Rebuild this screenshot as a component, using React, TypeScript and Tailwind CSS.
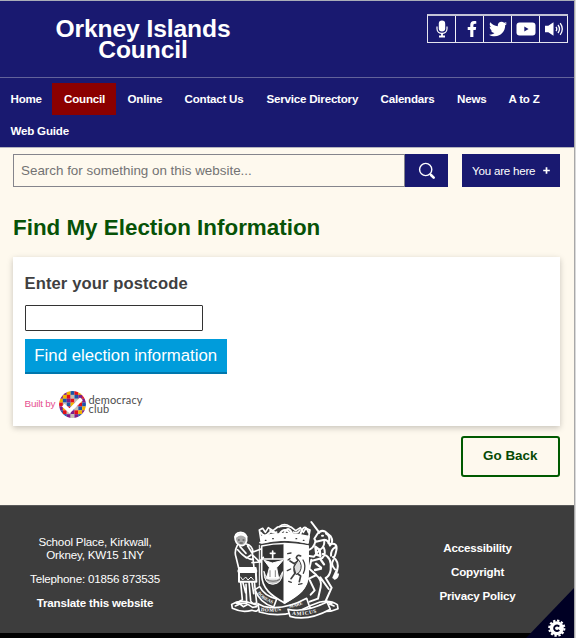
import { FaFacebookF, FaTwitter } from "react-icons/fa";

const navItems = [
  { label: "Home", cls: "w-[52px] pl-[10.5px]" },
  { label: "Council", cls: "w-[64px] pl-[12px] bg-[#8b0000]" },
  { label: "Online", cls: "w-[57px] pl-[11.5px]" },
  { label: "Contact Us", cls: "w-[82px] pl-[11.5px]" },
  { label: "Service Directory", cls: "w-[114px] pl-[11.5px]" },
  { label: "Calendars", cls: "w-[77px] pl-[11.5px]" },
  { label: "News", cls: "w-[51px] pl-[11px]" },
  { label: "A to Z", cls: "w-[60px] pl-[11.5px]" },
  { label: "Web Guide", cls: "w-[90px] pl-[10.5px]" },
];

function MicIcon() {
  return (
    <svg viewBox="0 0 12 18" className="w-3 h-[18px]" fill="none" stroke="white">
      <rect x="2.8" y="0.5" width="6.4" height="11" rx="3.2" fill="white" stroke="none" />
      <path d="M1 6.5v2.3c0 6 10 6 10 0V6.5" strokeWidth="1.2" />
      <path d="M6 13v3M3 16.5h6" strokeWidth="1.8" />
    </svg>
  );
}

function YoutubeIcon() {
  return (
    <svg viewBox="0 0 20 14" className="w-5 h-3.5">
      <rect x="0.5" y="0.5" width="19" height="13" rx="3" fill="white" />
      <path d="M8.3 4.6v4.8L12.6 7z" fill="#191970" />
    </svg>
  );
}

function SpeakerIcon() {
  return (
    <svg viewBox="0 0 20 14" className="w-5 h-3.5" fill="none" stroke="white" strokeWidth="1.3">
      <path d="M1 3.7h3.3L9.5 0.3v13.4L4.3 10.3H1z" fill="white" stroke="none" />
      <path d="M12 4.8q1.6 2.2 0 4.4M14 3q3 4 0 8M16.2 1.2q4.2 5.8 0 11.6" />
    </svg>
  );
}

const Y = "#f0b400";
const P = "#7d1d8a";
const B = "#1c55a8";
const R = "#e0111b";
const G = "#c3bfb2";
const mosaic = [
  [B, P, Y, B, R, Y, B],
  [P, Y, R, G, B, P, R],
  [Y, B, P, R, G, Y, P],
  [R, G, B, Y, P, R, B],
  [P, Y, R, B, G, B, Y],
  [B, R, G, P, R, Y, P],
  [Y, B, P, G, P, B, R],
];

function MosaicLogo() {
  return (
    <svg viewBox="0 0 28 28" className="w-[27px] h-[27px] shrink-0">
      <defs>
        <clipPath id="disc">
          <circle cx="14" cy="14" r="13.9" />
        </clipPath>
      </defs>
      <g clipPath="url(#disc)">
        {mosaic.map((row, r) =>
          row.map((fill, c) => <rect key={`${r}-${c}`} x={c * 4} y={r * 4} width="4.1" height="4.1" fill={fill} />)
        )}
      </g>
      <path d="M4.4 14.6l6.6 6L23.2 8.2" fill="none" stroke="white" strokeWidth="4" />
    </svg>
  );
}

function Crest() {
  return (
    <svg viewBox="0 0 390 360" className="w-[130px] h-[120px]" fill="none" stroke="white" strokeWidth="5" strokeLinejoin="round" strokeLinecap="round">
      {/* compartment */}
      <path d="M35 283q22-14 50-6l36 12q-6 20-26 12-30 8-58-6zM352 284q-20-14-52-8l-32 12q4 18 26 13 32 8 60-5z" />
      <path d="M46 288l14-6 10 8 14-7 14 9 12-2M342 288l-14-6-10 8-16-6-14 8" strokeWidth="5" />
      {/* crown */}
      <path d="M124 98L118 60l10-5 8 12 9-14 14 9 14-11 20-3 20 3 14 11 14-9 9 14 8-12 12 5-7 38q-70-17-143 0z" />
      <path d="M178 50q15-13 32 0M150 60q8 12 20 6M240 60q-8 12-20 6" strokeWidth="5" />
      <path d="M126 99q68-18 138 0l3-19q-71-18-144 0z" fill="white" />
      <path d="M122 68q12 16 24 2t24 4 24-6 24 6 24-4 24-2M180 70q14-20 30 0" strokeWidth="6" />
      <path d="M136 91h2M158 86h2M193 84h3M228 86h2M250 91h2" stroke="#3d3d3d" strokeWidth="4" />
      {/* shield */}
      <path d="M125 108q68-15 139 0v85c0 42-28 62-70 86-41-22-69-44-69-86z" fill="#333" strokeWidth="5" />
      <path d="M193 104q40-2 71 4v85c0 42-28 62-71 86z" fill="white" />
      <path d="M127 147h65" strokeWidth="5" />
      <path d="M158 123v22M151 130h14" strokeWidth="5" />
      <path d="M133 151l24 8 32-8-19 22 6 32h-36l8-32z" fill="white" strokeWidth="3" />
      <path d="M132 185q-1 36 26 38 29-2 30-38-7 20-17 22h-22q-10-2-17-22z" fill="white" fillOpacity=".7" strokeWidth="3" />
      <path d="M150 182v18M166 182v18M139 209q20 10 40 0" stroke="#444" strokeWidth="2" />
      <g stroke="#3d3d3d">
        <path d="M242 138q-10-5-13 5l6 9-12 9-13-8M224 166q-4 14 1 24l-12 16M230 189l12 9-4 17" strokeWidth="5" />
        <path d="M236 150q14 16 3 36l-11 8-6-22z" fill="#ddd" strokeWidth="3" />
        <path d="M203 131l10-2M204 150l6-4M202 182l10-5M206 214l8 3M236 223l10-2M250 190q10-22-1-40" strokeWidth="4" />
      </g>
      {/* udaller supporter */}
      <path d="M46 90q-5-22 16-23 20 1 18 25-4 14-14 15-15 0-20-17z" fill="#a8a8a8" />
      <path d="M47 80q15-14 32 0" strokeWidth="7" />
      <path d="M55 90h3M69 90h3M60 99h7" stroke="#3d3d3d" strokeWidth="3" />
      <path d="M52 106q-10 18-4 35l8 33h46l-4-39 20 20 12-13M79 102q18 4 20 24l24-9M53 119q22 27 47 30M60 110l18 20M83 108l15 24M66 133l14 11 13-9M96 158l26-2" />
      <path d="M57 174h50l2 41H57z" strokeWidth="6" />
      <path d="M58 183h48" strokeWidth="12" />
      <path d="M62 201l6 9 9-9 7 9 9-9 7 8" strokeWidth="3" />
      <path d="M62 216l5 53-18 11h31l-2-57M87 216l5 56q4 12 18 7l-7-64M69 218l8 30M96 218l5 33" />
      <path d="M118 106v120" strokeWidth="3" />
      {/* unicorn supporter */}
      <path d="M298 68L274 36" strokeWidth="6" />
      <path d="M292 72q10-14 24-7l16 14q10 16-2 28-4-17-17-18l-25 6-5-9zM306 77h3" strokeWidth="6" />
      <path d="M286 95q-4 20-23 26M313 91q1 22-15 29l-16 20-14-2M311 112q9 19-4 32l-31 8M308 132q29 8 24 48-3 18-15 24l18 29-18 40 18 8M274 149l-6 27 21 19-22 11 17 35-12 13M286 193q21 17 16 38l-8 35-25 9M301 202l25 35" strokeWidth="6" />
      <path d="M329 103q25-7 20 18t-10 20q19 13 13 38l-8 27q8-2 10-13M345 112q-13 8-12 25M340 150q-9 14 5 28M352 177l-12 26M325 99q9-20-7-28" strokeWidth="6" />
      <path d="M286 110l13 10 2 18-12-4zM300 146l12 17M288 161l15 12M285 180l18-4" strokeWidth="7" />
      {/* motto ribbon */}
      <path d="M105 239l14-9q13 27 51 37l-9 24q-42-12-56-52z" fill="#3d3d3d" strokeWidth="5" />
      <path d="M114 281l19 9q60 12 127-25l8 24q-75 39-150 17z" fill="#3d3d3d" strokeWidth="5" />
      <path d="M204 298q51 11 117-22l10 22q-67 37-121 21z" fill="#3d3d3d" strokeWidth="5" />
      <path id="ribbonLeft" d="M112 249q16 24 54 34" stroke="none" />
      <path id="ribbonMid" d="M122 303q46 7 84-7" stroke="none" />
      <path id="ribbonEnd" d="M208 294q30-6 54-17" stroke="none" />
      <path id="ribbonLow" d="M216 314q54 7 106-20" stroke="none" />
      <g fill="white" stroke="none" fontFamily="Liberation Serif, serif" fontWeight="700" fontSize="16">
        <text fontSize="14"><textPath href="#ribbonLeft">BOREAS</textPath></text>
        <text fontSize="15" letterSpacing="1.5"><textPath href="#ribbonMid">DOMUS</textPath></text>
        <text fontSize="14"><textPath href="#ribbonEnd">MARE</textPath></text>
        <text letterSpacing="2"><textPath href="#ribbonLow">AMICUS</textPath></text>
      </g>
    </svg>
  );
}

function CookieCorner() {
  return (
    <div className="absolute right-0 bottom-0 w-12 h-[50px]">
      <svg viewBox="0 0 48 50" className="w-12 h-[50px]">
        <path d="M48 0V50H0z" fill="#000024" />
        <circle cx="30.8" cy="40.2" r="7" fill="white" />
        <circle cx="30.8" cy="40.2" r="7.6" fill="none" stroke="white" strokeWidth="2" strokeDasharray="2.3 1.68" />
        <path d="M33.2 38.6a2.8 2.8 0 1 0 0 3.3" fill="none" stroke="#000024" strokeWidth="1.9" />
      </svg>
    </div>
  );
}

export default function App() {
  return (
    <div className="flex w-[576px] h-[638px] overflow-hidden bg-[#fef9ee] font-['Liberation_Sans',Arial,sans-serif]">
      <div className="relative flex flex-col w-[574px] h-[638px] shrink-0">
        <header className="flex justify-between h-[77px] bg-[#191970] border-t border-[#a9adb8]">
          <div className="w-[286px] pt-[16.5px] text-center text-white font-bold text-[24.6px] leading-[21px] tracking-[-0.1px]">
            Orkney Islands
            <br />
            Council
          </div>
          <div className="flex mt-[13px] mr-[6px] h-[29px] w-[141px] border-l border-b border-[#e4e4ee] border-t-2 border-t-[#c4c4d6] text-white *:flex *:w-7 *:shrink-0 *:items-center *:justify-center *:border-r *:border-[#f2f2f8]">
            <div><MicIcon /></div>
            <div className="pl-1"><FaFacebookF size={16} /></div>
            <div><FaTwitter size={18} /></div>
            <div><YoutubeIcon /></div>
            <div><SpeakerIcon /></div>
          </div>
        </header>
        <nav className="flex flex-wrap content-start h-[71px] pt-[5px] bg-[#191970] border-t border-t-[#62629a] border-b border-b-[#b4b4bf] text-white font-bold text-[11.6px] tracking-[-0.22px] leading-8 whitespace-nowrap">
          {navItems.map((n) => (
            <a key={n.label} className={`h-8 ${n.cls}`}>{n.label}</a>
          ))}
        </nav>
        <main className="flex flex-col h-[357px] bg-[#fef9ee]">
          <div className="flex h-[33px] mt-1.5 ml-[13px]">
            <div className="w-[392px] border border-[#85858c] pl-[7px] text-[13.4px] leading-8 text-[#737373]">
              Search for something on this website...
            </div>
            <div className="flex items-center justify-center w-[43px] bg-[#191970]">
              <svg viewBox="0 0 18 18" className="w-[18px] h-[18px]" fill="none" stroke="white">
                <circle cx="7.7" cy="7.5" r="6.1" strokeWidth="1.4" />
                <path d="M12 12l1.5 1.5" strokeWidth="1.4" />
                <path d="M13 13l2.7 2.7" strokeWidth="2.6" strokeLinecap="round" />
              </svg>
            </div>
            <div className="ml-3.5 w-[98px] bg-[#191970] pl-[10px] flex items-center text-white text-[11.6px]">
              <span className="w-[71px] tracking-[-0.22px]">You are here</span>
              <svg viewBox="0 0 7 7" className="w-[7px] h-[7px]"><path d="M3.5 .2v6.6M.2 3.5h6.6" stroke="white" strokeWidth="1.7" /></svg>
            </div>
          </div>
          <h1 className="mt-[27px] ml-3 pl-px h-[28px] font-bold text-[22.4px] leading-[28px] text-[#075207]">
            Find My Election Information
          </h1>
          <section className="mt-[15px] ml-[13px] w-[547px] h-[169px] shrink-0 bg-white pl-[11.5px] pt-[16px] shadow-[0_2px_6px_rgba(0,0,0,0.22)]">
            <h2 className="font-bold text-[16.6px] leading-[21px] tracking-[0.1px] text-[#403f41]">Enter your postcode</h2>
            <div className="mt-[10.5px] w-[178px] h-[26px] border border-[#333] rounded-[1px]" />
            <button className="block mt-[8.5px] w-[202.5px] h-[35px] bg-[#009cdb] border-b-2 border-[#0077ad] text-white text-[16.8px] leading-[30px] whitespace-nowrap">
              Find election information
            </button>
            <div className="flex items-center mt-[16.5px]">
              <span className="w-[34px] text-[9.9px] tracking-[-0.2px] text-[#e6508f] whitespace-nowrap">Built by</span>
              <MosaicLogo />
              <span className="flex flex-col ml-[3px] font-['Lato',sans-serif] text-[11px] leading-[9px] tracking-[0.15px] text-[#4d4d4d]">
                <span>democracy</span>
                <span>club</span>
              </span>
            </div>
          </section>
          <button className="mt-2.5 ml-[460.5px] w-[99.5px] h-[41px] shrink-0 border-2 border-[#005a00] rounded-[3px] text-[13.4px] font-bold text-[#064a06]">
            Go Back
          </button>
        </main>
        <footer className="flex h-[128px] bg-[#3d3d3d] border-t border-[#5a5a5a] text-white text-[11.6px] tracking-[-0.18px] text-center">
          <div className="w-[190px] pt-[29px] leading-[13px]">
            <p>School Place, Kirkwall,<br />Orkney, KW15 1NY</p>
            <p className="mt-[11px]">Telephone: 01856 873535</p>
            <p className="mt-[11px] font-bold">Translate this website</p>
          </div>
          <div className="w-[191px] pl-[30px] pt-1"><Crest /></div>
          <div className="w-[193px] pt-[30px] font-bold leading-6">
            <p>Accessibility</p>
            <p>Copyright</p>
            <p>Privacy Policy</p>
          </div>
        </footer>
        <div className="h-[5px] bg-black" />
        <CookieCorner />
      </div>
      <div className="w-0.5 bg-[#d9d9d9] border-l border-[#a8a8a8]" />
    </div>
  );
}
